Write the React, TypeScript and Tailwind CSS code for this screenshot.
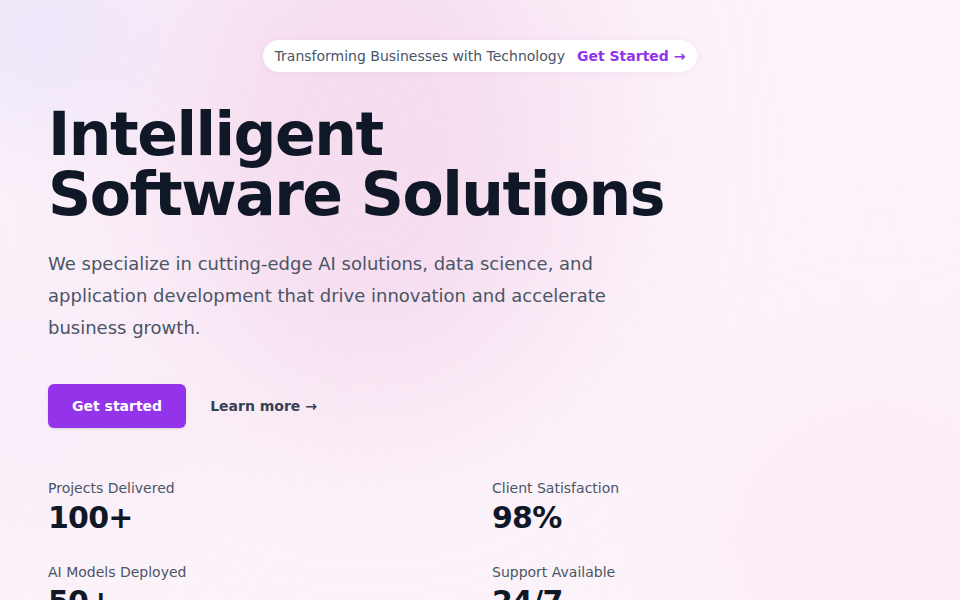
import React from "react";

const stats = [
  { label: "Projects Delivered", value: "100+" },
  { label: "Client Satisfaction", value: "98%" },
  { label: "AI Models Deployed", value: "50+" },
  { label: "Support Available", value: "24/7" },
];

export default function App() {
  return (
    <div
      className="relative min-h-screen w-full overflow-hidden bg-[#fcf3fa]"
      style={{ fontFamily: '"DejaVu Sans", sans-serif' }}
    >
      <div className="pointer-events-none absolute left-[160px] top-[-120px] h-[540px] w-[420px] rounded-full bg-[#f3d3ea] opacity-70 blur-[90px]" />
      <div className="pointer-events-none absolute left-[-80px] top-[-80px] h-[220px] w-[240px] rounded-full bg-[#ebe3fb] opacity-80 blur-[60px]" />
      <div className="pointer-events-none absolute left-[-120px] top-[220px] h-[340px] w-[300px] rounded-full bg-[#f7ebf8] opacity-70 blur-[80px]" />
      <div className="pointer-events-none absolute right-[-100px] top-[380px] h-[320px] w-[360px] rounded-full bg-[#fbe6f5] opacity-60 blur-[90px]" />

      <div className="relative px-12 pt-10">
        <div className="flex justify-center">
          <div className="rounded-full bg-white px-3 py-1 text-sm leading-6 text-gray-600 shadow-[0_1px_6px_rgba(200,150,200,0.15)]">
            Transforming Businesses with Technology
            <span className="ml-3 font-semibold text-[#9333ea]">Get Started →</span>
          </div>
        </div>

        <h1 className="mt-8 text-6xl font-bold leading-none tracking-tight text-gray-900">
          Intelligent
          <br />
          Software Solutions
        </h1>

        <p className="mt-6 max-w-xl text-lg leading-8 text-gray-600">
          We specialize in cutting-edge AI solutions, data science, and application development that drive
          innovation and accelerate business growth.
        </p>

        <div className="mt-10 flex items-center gap-x-6">
          <a className="rounded-md bg-[#9333ea] px-6 py-2.5 text-sm font-semibold leading-6 text-white shadow-sm">
            Get started
          </a>
          <a className="text-sm font-semibold leading-6 text-gray-700">Learn more →</a>
        </div>

        <dl className="mt-12 grid grid-cols-2 gap-x-6 gap-y-6">
          {stats.map((s) => (
            <div key={s.label} className="flex flex-col">
              <dt className="text-sm leading-6 text-gray-600">{s.label}</dt>
              <dd className="text-3xl font-bold leading-9 tracking-tight text-gray-900">{s.value}</dd>
            </div>
          ))}
        </dl>
      </div>
    </div>
  );
}
